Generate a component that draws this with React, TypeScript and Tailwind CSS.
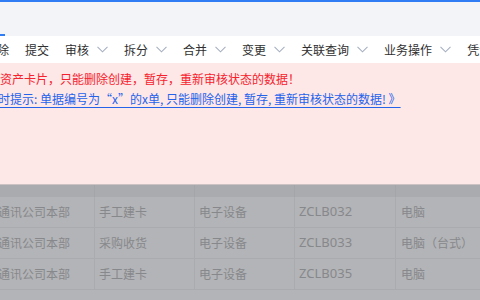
import React from "react";

const Chevron = () => (
  <svg width="11" height="7" viewBox="0 0 11 7" className="ml-[8px]">
    <path d="M0.5 0.8 L5.5 5.8 L10.5 0.8" fill="none" stroke="#a7b0c0" strokeWidth="1.1" />
  </svg>
);

const items: { label: string; chev: boolean }[] = [
  { label: "删除", chev: false },
  { label: "提交", chev: false },
  { label: "审核", chev: true },
  { label: "拆分", chev: true },
  { label: "合并", chev: true },
  { label: "变更", chev: true },
  { label: "关联查询", chev: true },
  { label: "业务操作", chev: true },
  { label: "凭证", chev: false },
];

const rows = [
  ["中国通讯公司本部", "手工建卡", "电子设备", "ZCLB032", "电脑"],
  ["中国通讯公司本部", "采购收货", "电子设备", "ZCLB033", "电脑（台式）"],
  ["中国通讯公司本部", "手工建卡", "电子设备", "ZCLB035", "电脑"],
];

export default function App() {
  return (
    <div
      className="w-[480px] h-[300px] overflow-hidden relative bg-[#b3b4b7] flex flex-col"
      style={{ fontFamily: '"Noto Sans CJK SC", "Noto Sans", sans-serif' }}
    >
      <div className="h-[2px] bg-[#2f7cf5] shrink-0" />
      <div className="h-[34px] bg-[#f2f4f8] shrink-0 flex items-end">
        <div className="w-[5px] h-[2px] bg-[#2f7cf5]" />
      </div>
      <div className="h-[27px] bg-white shrink-0 flex items-center ml-[-15px] gap-[16px] text-[12px] text-[#2f2f2f] whitespace-nowrap">
        {items.map((it) => (
          <div key={it.label} className="flex items-center">
            <span>{it.label}</span>
            {it.chev && <Chevron />}
          </div>
        ))}
      </div>
      <div className="h-[122px] bg-[#fee7e7] shrink-0 border-b border-[#cdc2c3] pt-[5px] text-[12px] leading-[21px] whitespace-nowrap">
        <div className="text-[#f5222d]">资产卡片，只能删除创建，暂存，重新审核状态的数据！</div>
        <div className="text-[#2563eb] underline underline-offset-[3px] ml-[-2px] leading-[20px]">
          时提示: 单据编号为“x”的x单, 只能删除创建, 暂存, 重新审核状态的数据! 》
        </div>
      </div>
      <div className="h-[12px] bg-[#a9abae] shrink-0 flex">
        <div className="w-[95px] border-r border-[#a3a5a8]" />
        <div className="w-[100px] border-r border-[#a3a5a8]" />
        <div className="w-[100px] border-r border-[#a3a5a8]" />
        <div className="w-[101px] border-r border-[#a3a5a8]" />
      </div>
      {rows.map((r, i) => (
        <div key={i} className="h-[31px] shrink-0 flex border-b border-[#aaabae] text-[12px] text-[#87888b] whitespace-nowrap">
          <div className="w-[95px] border-r border-[#aaabae] overflow-hidden flex items-center justify-end pr-[24px]">
            {r[0]}
          </div>
          <div className="w-[100px] border-r border-[#aaabae] flex items-center pl-[4px]">{r[1]}</div>
          <div className="w-[100px] border-r border-[#aaabae] flex items-center pl-[4px]">{r[2]}</div>
          <div className="w-[101px] border-r border-[#aaabae] flex items-center pl-[4px]" style={{ fontFamily: '"Noto Sans", sans-serif', fontSize: "13px" }}>{r[3]}</div>
          <div className="flex-1 flex items-center pl-[5px]">{r[4]}</div>
        </div>
      ))}
    </div>
  );
}
